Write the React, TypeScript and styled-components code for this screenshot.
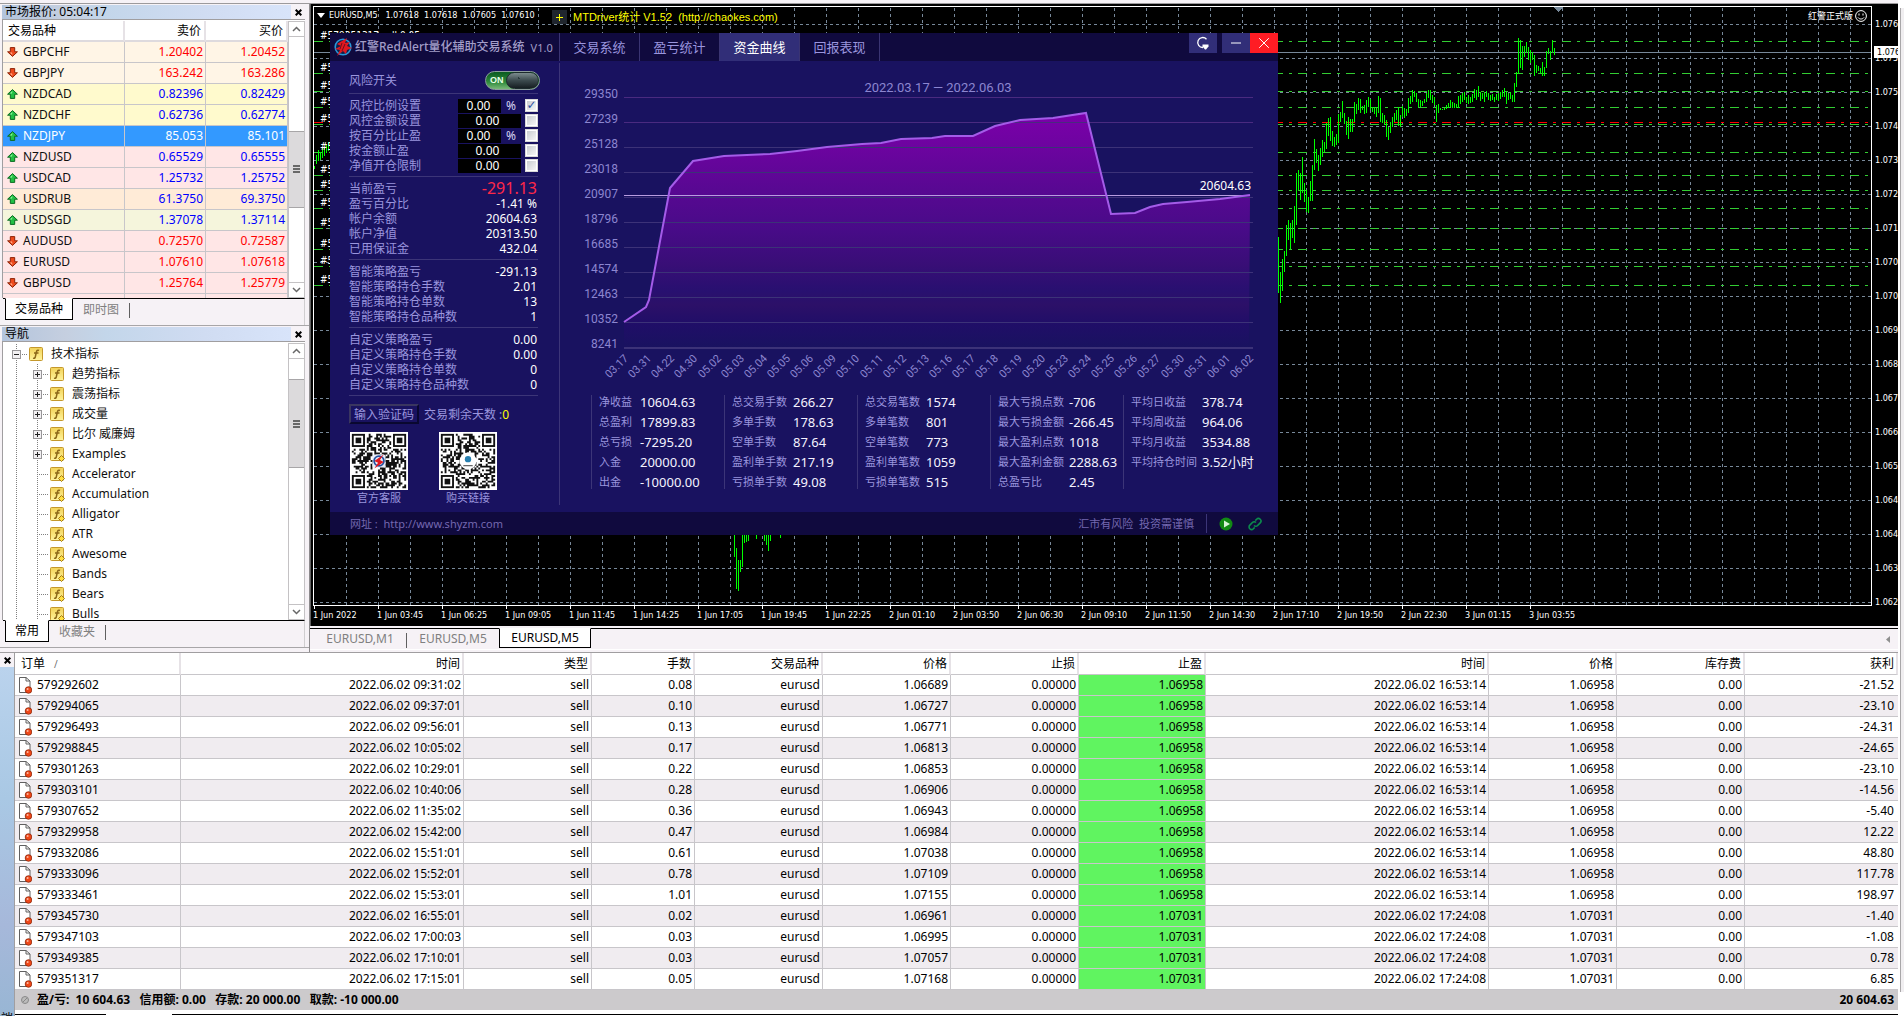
import React from "react";
import styled, { createGlobalStyle, css } from "styled-components";

const UI = `"Noto Sans", "Noto Sans CJK SC", sans-serif`;
const TINY = `"DejaVu Sans Condensed", "Noto Sans CJK SC", sans-serif`;
const THIN = `Roboto, "Noto Sans CJK SC", sans-serif`;

const Global = createGlobalStyle`
  * { box-sizing: border-box; }
  html, body { margin: 0; }
  body { background: #f6f2f6; font: 12px/14px ${UI}; color: #000; overflow: hidden; }
  button, input { font: inherit; margin: 0; padding: 0; border: 0; border-radius: 0; }
  svg { display: block; }
`;

const Page = styled.div`
  display: flex;
  min-height: 100vh;
`;
const Main = styled.main`
  flex: 1;
  min-width: 0;
  padding-top: 3px;
`;
const EdgeStrip = styled.div`
  width: 6px;
  padding: 8px 0 24px 2px;
  background: #fff;
  &::before {
    content: "";
    display: block;
    height: 100%;
    border-left: 1px solid #a8a6a8;
    background: #f0eef0;
  }
`;
const Workspace = styled.div`
  display: flex;
  border-top: 1px solid #9c9a9c;
`;
const Side = styled.aside`
  width: 310px;
  flex: none;
  border-right: 1px solid #8c8a8c;
  padding-bottom: 4px;
`;

/* docked panels */
const Dock = styled.section`
  padding: 1px 4px 0 2px;
  border-bottom: 1px solid #a8a6a8;
`;
const DockTitle = styled.header`
  display: flex;
  justify-content: space-between;
  align-items: center;
  height: 14px;
`;
const DockName = styled.h2`
  flex: 1;
  margin: 0;
  padding-left: 3px;
  font: 12px/14px ${UI};
  background: linear-gradient(90deg, #b3c4dc, #c5cfe0 22%, #c3d6ea 36%, #d0dcf2 70%, #d8e4fa);
`;
const CloseX = styled.button`
  width: 14px;
  height: 14px;
  background: none;
  display: grid;
  place-items: center;
`;
const DockFrame = styled.div`
  display: flex;
  height: 279px;
  border: 1px solid #a09ea0;
  border-width: 1px 0 0 1px;
  padding-top: 1px;
  background: #fff;
`;
const DockContent = styled.div`
  flex: 1;
  min-width: 0;
  overflow: hidden;
`;
const DockTabs = styled.div`
  display: flex;
  align-items: flex-start;
  height: 27px;
  margin-left: 1px;
  padding-left: 2px;
  border-top: 1px solid #000;
  border-right: 1px solid #d0ced0;
`;
const DockTab = styled.button<{ $on?: boolean }>`
  height: 22px;
  padding: 0 10px;
  color: #808080;
  background: transparent;
  ${(p) =>
    p.$on &&
    css`
      color: #000;
      background: #fff;
      margin-top: -1px;
      border: 1px solid #000;
      border-top-color: #fff;
      padding: 0 9px;
    `}
`;
const TabRule = styled.i`
  width: 1px;
  height: 15px;
  margin-top: 4px;
  background: #606060;
`;

const Track = styled.div`
  display: flex;
  flex-direction: column;
  width: 17px;
  border: 1px solid #c4c2c4;
  border-width: 0 1px;
`;
const Arrow = styled.button`
  height: 16px;
  flex: none;
  display: grid;
  place-items: center;
  background: #fff;
  border: 1px solid #c4c2c4;
  border-width: 1px 0;
`;
const Gap = styled.i<{ $grow: number }>`
  flex: ${(p) => p.$grow} 1 0;
`;
const Thumb = styled.i<{ $grow: number }>`
  flex: ${(p) => p.$grow} 1 0;
  display: grid;
  place-items: center;
  background: #dcdadc;
  border: 1px solid #a8a6a8;
  border-width: 1px 0;
`;

const Quotes = styled.table`
  width: 100%;
  table-layout: fixed;
  border-collapse: separate;
  border-spacing: 0;
`;
const QuoteHead = styled.th<{ $left?: boolean }>`
  height: 21px;
  padding: 0 3px 0 5px;
  font-weight: 400;
  text-align: ${(p) => (p.$left ? "left" : "right")};
  border-right: 2px solid #e6e2e6;
  border-bottom: 2px solid #dedade;
`;
const QuoteRow = styled.tr<{ $bg: string; $fg: string; $sel?: boolean }>`
  background: ${(p) => p.$bg};
  color: ${(p) => p.$fg};
  td {
    color: ${(p) => (p.$sel ? "#fff" : "inherit")};
  }
`;
const QuoteCell = styled.td`
  height: 21px;
  padding: 0 2px;
  text-align: right;
  border-right: 1px solid #c8c6ca;
  border-bottom: 1px solid #c8c6ca;
`;
const NameCell = styled.th<{ $sel?: boolean }>`
  height: 21px;
  padding: 0 0 0 4px;
  font-weight: 400;
  text-align: left;
  color: ${(p) => (p.$sel ? "#fff" : "#101010")};
  border-right: 1px solid #c8c6ca;
  border-bottom: 1px solid #c8c6ca;
`;
const IconText = styled.span<{ $gap: number }>`
  display: flex;
  align-items: center;
  gap: ${(p) => p.$gap}px;
`;

const Tree = styled.ul`
  list-style: none;
  margin: 0;
  padding: 1px 0 0;
`;
const Leaf = styled.li`
  display: flex;
  align-items: center;
  height: 20px;
  color: #101010;
`;
const Guide = styled.span<{ $w: number; $arm?: boolean }>`
  display: flex;
  align-items: center;
  width: ${(p) => p.$w}px;
  height: 20px;
  padding-left: 9px;
  background: repeating-linear-gradient(#808080 0 1px, transparent 1px 2px) 13px 0 / 1px 100% no-repeat,
    ${(p) => (p.$arm ? "repeating-linear-gradient(90deg, #808080 0 1px, transparent 1px 2px) 13px 10px / 11px 1px no-repeat" : "linear-gradient(transparent, transparent)")};
`;
const Expander = styled.button`
  width: 9px;
  height: 9px;
  background: #f2f0f2;
  border: 1px solid #989698;
`;
const LeafText = styled.span`
  padding-left: 7px;
`;

/* price chart */
const Center = styled.div`
  flex: 1;
  min-width: 0;
  display: flex;
  flex-direction: column;
`;
const ChartBox = styled.div`
  position: relative;
  display: grid;
  grid-template-columns: minmax(0, 1fr) 26px;
  grid-template-rows: auto 20px;
  padding: 2px 0 0 2px;
  border-left: 1px solid #606060;
  background: #000;
  color: #fff;
  font: 9px/12px ${TINY};
  overflow: hidden;
`;
const Plot = styled.div`
  border: 1px solid #fff;
`;
const PriceAxis = styled.div`
  display: flex;
  flex-direction: column;
  padding-top: 12px;
  margin-bottom: -8px;
  gap: 22px;
  span::before {
    content: "";
    width: 3px;
    height: 1px;
    margin-right: 3px;
    background: #fff;
  }
  span {
    display: flex;
    align-items: center;
    height: 12px;
  }
`;
const PriceTag = styled.div`
  position: absolute;
  top: 42px;
  right: 0;
  width: 24px;
  padding-left: 3px;
  background: #fff;
  color: #000;
`;
const TimeAxis = styled.div`
  display: flex;
  overflow: hidden;
`;
const Tick = styled.span`
  width: 64px;
  flex: none;
  white-space: nowrap;
  &::before {
    content: "";
    display: block;
    width: 1px;
    height: 3px;
    margin-left: 1px;
    background: #fff;
  }
`;
const ChartCaption = styled.div`
  position: absolute;
  top: 4px;
  left: 6px;
  display: flex;
  align-items: center;
  gap: 4px;
  white-space: pre;
  line-height: 14px;
`;
const StatsCaption = styled.div`
  position: absolute;
  top: 6px;
  left: 241px;
  display: flex;
  align-items: center;
  gap: 6px;
  color: #ffff00;
  font: 11px/14px "Liberation Sans", "Noto Sans CJK SC", sans-serif;
  white-space: pre;
`;
const AddButton = styled.button`
  width: 15px;
  height: 14px;
  background: #20262e;
  color: #ffff00;
  display: grid;
  place-items: center;
`;
const ExpertName = styled.div`
  position: absolute;
  top: 6px;
  right: 31px;
  display: flex;
  align-items: center;
  gap: 2px;
`;
const ChartTabs = styled.nav`
  display: flex;
  align-items: flex-start;
  height: 22px;
  margin-top: 2px;
  padding-left: 4px;
  border-top: 1px solid #000;
  border-bottom: 1px solid #fff;
`;
const ChartTab = styled.button<{ $on?: boolean }>`
  width: 92px;
  height: 20px;
  color: #808080;
  background: transparent;
  ${(p) =>
    p.$on &&
    css`
      color: #000;
      background: #fff;
      margin-top: -1px;
      border: 1px solid #000;
      border-top-color: #fff;
    `}
`;
const ScrollMark = styled.span`
  margin: 7px 8px 0 auto;
`;

/* RedAlert window */
const Win = styled.section`
  position: absolute;
  top: 29px;
  left: 19px;
  width: 948px;
  background: #191260;
  color: #9a95de;
  font: 12px/15px ${UI};
`;
const WinHead = styled.header`
  display: flex;
  height: 28px;
  background: #100a3e;
`;
const Brand = styled.div`
  display: flex;
  align-items: center;
  gap: 3px;
  width: 230px;
  padding-left: 4px;
  color: #a29dc8;
  border-right: 1px solid #3a3472;
`;
const BrandName = styled.h1`
  margin: 0;
  font: 500 12px/16px ${UI};
`;
const Version = styled.small`
  margin-left: 3px;
  font-size: 11px;
`;
const WinTab = styled.button<{ $on?: boolean }>`
  width: 80px;
  font: 13px/28px ${UI};
  color: ${(p) => (p.$on ? "#fff" : "#9a95de")};
  background: ${(p) => (p.$on ? "#312e78" : "transparent")};
  border-right: 1px solid #3a3472;
`;
const WinButtons = styled.div`
  display: flex;
  margin-left: auto;
`;
const WinButton = styled.button<{ $bg?: string; $apart?: boolean }>`
  width: 28px;
  height: 20px;
  margin-right: ${(p) => (p.$apart ? 5 : 0)}px;
  display: grid;
  place-items: center;
  background: ${(p) => p.$bg ?? "#312e78"};
`;
const WinBody = styled.div`
  display: flex;
`;
const Controls = styled.div`
  width: 230px;
  margin: 2px 0 7px;
  padding: 0 21px 0 19px;
  border-right: 1px solid #3c3578;
`;
const Group = styled.div`
  padding: 4px 0 3px 0;
  border-bottom: 1px solid #3c3578;
`;
const SwitchLine = styled.div`
  display: flex;
  align-items: center;
  justify-content: space-between;
  height: 31px;
  padding-top: 5px;
  border-bottom: 1px solid #3c3578;
`;
const Switch = styled.button`
  display: flex;
  align-items: center;
  justify-content: space-between;
  width: 55px;
  height: 19px;
  padding-left: 4px;
  margin-right: -2px;
  border: 1px solid #8c9c9c;
  border-radius: 10px;
  background: linear-gradient(#0a5a20, #2f8c3c 60%, #7ab87a);
  color: #e8ffe8;
  font: bold 9px/15px "Liberation Sans", sans-serif;
  overflow: hidden;
`;
const Knob = styled.i`
  width: 33px;
  height: 17px;
  border-radius: 9px;
  background: radial-gradient(circle, #2a3a3c 1px, transparent 1px) 10px 4px / 3px 3px no-repeat, linear-gradient(#7c8c8e, #3c4a4e 50%, #161e22);
  border: 1px solid #1c2a2c;
`;
const Line = styled.div`
  display: flex;
  align-items: center;
  height: 15px;
`;
const LineLabel = styled.label`
  flex: 1;
`;
const LineValue = styled.output<{ $alarm?: boolean }>`
  padding-right: 1px;
  color: ${(p) => (p.$alarm ? "#ff2848" : "#fff")};
  font-size: ${(p) => (p.$alarm ? 16 : 12)}px;
`;
const Field = styled.input<{ $wide?: boolean }>`
  width: ${(p) => (p.$wide ? 63 : 43)}px;
  height: 14px;
  margin-right: ${(p) => (p.$wide ? 4 : 0)}px;
  padding-right: ${(p) => (p.$wide ? 4 : 2)}px;
  background: #000;
  color: #fff;
  text-align: center;
`;
const Percent = styled.span`
  width: 24px;
  padding-left: 5px;
  color: #d8d6f4;
`;
const Tick13 = styled.input`
  appearance: none;
  width: 13px;
  height: 13px;
  border: 1px solid #d8d8d8;
  box-shadow: inset 0 0 0 1px #fff;
  background: linear-gradient(135deg, #c4c8cc, #fafafa);
  display: grid;
  place-items: center;
  &:checked::after {
    content: "✓";
    color: #2c50a0;
    font: bold 12px/11px "DejaVu Sans", sans-serif;
  }
`;
const CodeLine = styled.div`
  display: flex;
  align-items: center;
  gap: 5px;
  margin: 8px 0;
`;
const CodeButton = styled.button`
  width: 70px;
  height: 20px;
  background: #191260;
  color: #9a95de;
  border: 2px solid;
  border-color: #3a3660 #0a0830 #0a0830 #3a3660;
`;
const Days = styled.b`
  font-weight: 400;
  color: #ffff00;
`;
const Codes = styled.div`
  display: flex;
  gap: 31px;
  padding-left: 1px;
`;
const Code = styled.figure`
  margin: 0;
  width: 58px;
  text-align: center;
  font-size: 11px;
  line-height: 15px;
`;

const Report = styled.div`
  flex: 1;
`;
const Stats = styled.div`
  display: grid;
  grid-template-columns: repeat(5, 133px);
  padding: 10px 0 0 31px;
`;
const StatList = styled.dl<{ $label: number }>`
  display: grid;
  grid-template-columns: ${(p) => p.$label}px auto;
  grid-auto-rows: 14px;
  row-gap: 6px;
  height: 94px;
  margin: 0;
  padding-left: 7px;
  border-left: 1px solid #3c3578;
  line-height: 14px;
  white-space: nowrap;
  dt {
    font-size: 11px;
  }
  dd {
    margin: 0;
    font-size: 13px;
    color: #f4f2ff;
  }
`;
const WinFoot = styled.footer`
  display: flex;
  align-items: center;
  height: 23px;
  padding: 0 16px 0 20px;
  background: #100a3e;
  color: #7468b0;
  font-size: 11px;
`;
const Site = styled.a`
  color: inherit;
  text-decoration: none;
  white-space: pre;
`;
const Notice = styled.span`
  margin-left: auto;
  padding-right: 12px;
  line-height: 19px;
  border-right: 1px solid #3c3578;
`;
const FootButton = styled.button`
  width: 14px;
  height: 14px;
  margin-left: 12px;
  background: none;
  & + & {
    margin-left: 15px;
  }
`;

/* terminal */
const Terminal = styled.section`
  display: flex;
  border-top: 1px solid #a09ea0;
`;
const Handle = styled.div`
  width: 14px;
  display: flex;
  flex-direction: column;
  background: linear-gradient(#bcd4ee, #a9c8e4 40%, #a6b8da 75%, #98b6d4);
  overflow: hidden;
`;
const HandleTop = styled.div`
  height: 14px;
  padding-right: 2px;
  background: #f6f2f6;
`;
const HandleName = styled.span`
  margin: auto 0 -10px 1px;
`;
const Ledger = styled.div`
  flex: 1;
  min-width: 0;
  border-left: 1px solid #a09ea0;
  background: #fff;
`;
const Orders = styled.table`
  width: 100%;
  table-layout: fixed;
  border-collapse: separate;
  border-spacing: 0;
`;
const OrderHead = styled.th`
  height: 22px;
  padding: 0 2px 0 6px;
  font-weight: 400;
  text-align: right;
  white-space: pre;
  border-right: 2px solid #e6e2e6;
  border-bottom: 1px solid #c8c6ca;
  &:first-child {
    text-align: left;
  }
`;
const SortMark = styled.span`
  padding-left: 9px;
  color: #707070;
  font-size: 10px;
`;
const OrderRow = styled.tr`
  &:nth-child(even) {
    background: #f0ecf0;
  }
`;
const OrderCell = styled.td<{ $hit?: boolean }>`
  height: 21px;
  padding: 0 2px 0 3px;
  text-align: right;
  white-space: nowrap;
  border-right: 1px solid #c8c6ca;
  border-bottom: 1px solid #c8c6ca;
  background: ${(p) => (p.$hit ? "#60f460" : "transparent")};
  &:last-child {
    padding-right: 4px;
    border-right: 0;
  }
`;
const TotalCell = styled.td`
  height: 20px;
  padding: 0 4px 0 3px;
  font-weight: 700;
  white-space: pre;
  background: #cccacc;
  &:last-child {
    text-align: right;
  }
`;
const TerminalTabs = styled.div`
  display: flex;
  height: 6px;
  padding-top: 4px;
`;
const Edge = styled.i<{ $w?: number; $blank?: boolean }>`
  ${(p) => (p.$w ? `width: ${p.$w}px;` : "flex: 1;")}
  border-top: 1px solid ${(p) => (p.$blank ? "#fff" : "#000")};
`;

/* ---------- icons ---------- */
const Cross = ({ c = "#000", s = 7, w = 2 }: { c?: string; s?: number; w?: number }) => (
  <svg width={s} height={s} viewBox="0 0 10 10">
    <path d="M1 1l8 8M9 1l-8 8" stroke={c} strokeWidth={(w * 10) / s} />
  </svg>
);
const Direction = ({ up }: { up?: boolean }) => (
  <svg width="11" height="10" viewBox="0 0 11 10">
    <g transform={up ? "" : "translate(0 10) scale(1 -1)"}>
      <path
        d="M5.500.600L10.400 5.200H7.700V9.400H3.300V5.200H.600Z"
        fill={up ? "#22c044" : "#ee4a1c"}
        stroke={up ? "#0c6a22" : "#8e2408"}
        strokeWidth="1"
      />
      <path d="M5.500 2L3 4.500H5Z" fill={up ? "#9af0a0" : "#ffb494"} />
    </g>
  </svg>
);
const FIcon = ({ custom }: { custom?: boolean }) => (
  <svg width="15" height="15" viewBox="0 0 15 15">
    <defs>
      <linearGradient id="gold" x2="0" y2="1">
        <stop offset="0" stopColor="#f2d258" />
        <stop offset="1" stopColor="#fff49c" />
      </linearGradient>
    </defs>
    <rect x=".5" y=".5" width="13" height="13" rx="1" fill="url(#gold)" stroke="#c4982c" />
    <path d="M10 3.500C8.500 2.600 7.700 3.600 7.400 5L6.200 10.300C5.900 11.400 5.200 11.600 4.200 11M5 6H9.500" fill="none" stroke="#8c6818" strokeWidth="1.500" />
    {custom && <path d="M11.500 8.500l3 3-3 3-3-3Z" fill="#ffe040" stroke="#a07818" />}
  </svg>
);
const DocIcon = () => (
  <svg width="14" height="18" viewBox="0 0 14 18">
    <path d="M1.500 1.500H8L12 5V16.500H1.500Z" fill="#fff" stroke="#606060" />
    <path d="M8 1.500V5H12" fill="none" stroke="#606060" />
    <circle cx="10.500" cy="14" r="3.300" fill="#f04818" stroke="#8c2408" strokeWidth=".8" />
    <circle cx="9.600" cy="13" r="1" fill="#ffb8a0" />
  </svg>
);
const Chevron = ({ down }: { down?: boolean }) => (
  <svg width="9" height="6" viewBox="0 0 9 6">
    <path d={down ? "M1 1l3.500 3.500L8 1" : "M1 5l3.500-3.500L8 5"} fill="none" stroke="#686868" strokeWidth="1.500" />
  </svg>
);
const Scrollbar = ({ parts }: { parts: [number, number, number] }) => (
  <Track>
    <Arrow aria-label="向上"><Chevron /></Arrow>
    <Gap $grow={parts[0]} />
    <Thumb $grow={parts[1]}>
      <svg width="7" height="8"><path d="M0 1h7M0 4h7M0 7h7" stroke="#686868" strokeWidth="2" /></svg>
    </Thumb>
    <Gap $grow={parts[2]} />
    <Arrow aria-label="向下"><Chevron down /></Arrow>
  </Track>
);
const Logo = () => (
  <svg width="18" height="20" viewBox="0 0 18 20">
    <circle cx="9" cy="10" r="7.800" fill="#10204c" stroke="#2a98d8" strokeWidth="1.600" />
    <path d="M13 1L3 7l4 2-6 3 5 1-3 6 6-5 3 3 1-4 5-2-5-2 3-4-5 1Z" fill="#e01820" />
    <path d="M8 6l-2 6M11 7l-3 7" stroke="#701018" />
  </svg>
);

const QR_CELLS = 29;
const Qr = ({ seed, children }: { seed: number; children: React.ReactNode }) => {
  let s = seed;
  let d = "";
  const corner = (x: number, y: number) =>
    (x < 8 && y < 8) || (x >= QR_CELLS - 8 && y < 8) || (x < 8 && y >= QR_CELLS - 8);
  for (let y = 0; y < QR_CELLS; y++)
    for (let x = 0; x < QR_CELLS; x++) {
      s = (s * 1103515245 + 12345) % 2147483648;
      if (!corner(x, y) && (s >> 16) % 2) d += `M${x} ${y}h1v1h-1z`;
    }
  const eye = (x: number, y: number) => (
    <g transform={`translate(${x} ${y})`}>
      <rect x=".5" y=".5" width="6" height="6" fill="none" stroke="#111" />
      <rect x="2" y="2" width="3" height="3" fill="#111" />
    </g>
  );
  return (
    <svg width="58" height="58" viewBox="-1 -1 31 31">
      <rect x="-1" y="-1" width="31" height="31" fill="#fff" />
      <path d={d} fill="#111" />
      {eye(0, 0)}
      {eye(QR_CELLS - 7, 0)}
      {eye(0, QR_CELLS - 7)}
      {children}
    </svg>
  );
};

/* ---------- data ---------- */
const RED = "#ff0000";
const BLUE = "#0000ff";
const quotes: [string, string, string, boolean, string][] = [
  ["GBPCHF", "1.20402", "1.20452", false, "#fff5e6"],
  ["GBPJPY", "163.242", "163.286", false, "#fff5e6"],
  ["NZDCAD", "0.82396", "0.82429", true, "#fffacd"],
  ["NZDCHF", "0.62736", "0.62774", true, "#fffacd"],
  ["NZDJPY", "85.053", "85.101", true, "#3399ff"],
  ["NZDUSD", "0.65529", "0.65555", true, "#ffe6e6"],
  ["USDCAD", "1.25732", "1.25752", true, "#ffe6e6"],
  ["USDRUB", "61.3750", "69.3750", true, "#ffebd7"],
  ["USDSGD", "1.37078", "1.37114", true, "#f5f5dc"],
  ["AUDUSD", "0.72570", "0.72587", false, "#ffe6e6"],
  ["EURUSD", "1.07610", "1.07618", false, "#ffe6e6"],
  ["GBPUSD", "1.25764", "1.25779", false, "#ffe6e6"],
];
const folders = ["趋势指标", "震荡指标", "成交量", "比尔 威廉姆", "Examples"];
const indicators = ["Accelerator", "Accumulation", "Alligator", "ATR", "Awesome", "Bands", "Bears", "Bulls"];

const orders: string[][] = [
  ["579292602", "09:31:02", "0.08", "1.06689", "-21.52"],
  ["579294065", "09:37:01", "0.10", "1.06727", "-23.10"],
  ["579296493", "09:56:01", "0.13", "1.06771", "-24.31"],
  ["579298845", "10:05:02", "0.17", "1.06813", "-24.65"],
  ["579301263", "10:29:01", "0.22", "1.06853", "-23.10"],
  ["579303101", "10:40:06", "0.28", "1.06906", "-14.56"],
  ["579307652", "11:35:02", "0.36", "1.06943", "-5.40"],
  ["579329958", "15:42:00", "0.47", "1.06984", "12.22"],
  ["579332086", "15:51:01", "0.61", "1.07038", "48.80"],
  ["579333096", "15:52:01", "0.78", "1.07109", "117.78"],
  ["579333461", "15:53:01", "1.01", "1.07155", "198.97"],
  ["579345730", "16:55:01", "0.02", "1.06961", "-1.40"],
  ["579347103", "17:00:03", "0.03", "1.06995", "-1.08"],
  ["579349385", "17:10:01", "0.03", "1.07057", "0.78"],
  ["579351317", "17:15:01", "0.05", "1.07168", "6.85"],
];

const orderLines = [41, 73, 91, 107, 124, 152, 175, 190, 208, 228, 249, 266, 285];
/* bars two pixels apart: high then low of each, in thirds of a pixel */
const rally: number[] = [
  711, 880, 815, 908, 777, 873, 753, 816, 675, 767, 660, 719, 670, 748, 660, 714, 618, 728, 519, 675, 510, 570, 519, 600,
  472, 578, 549, 607, 571, 636, 591, 638, 543, 603, 495, 602, 417, 510, 447, 490, 466, 512, 443, 494, 420, 470, 427, 457,
  370, 447, 354, 407, 350, 422, 393, 437, 411, 442, 402, 436, 342, 430, 336, 365, 303, 353, 339, 372, 362, 404, 351, 418,
  358, 396, 357, 396, 306, 367, 313, 343, 294, 330, 297, 340, 318, 330, 315, 342, 300, 340, 290, 322, 298, 330, 320, 335,
  322, 343, 325, 350, 288, 340, 295, 365, 340, 370, 345, 375, 360, 412, 380, 420, 365, 400, 350, 380, 340, 365, 330, 360,
  322, 378, 345, 380, 318, 350, 325, 355, 328, 348, 295, 340, 288, 312, 270, 305, 272, 290, 280, 305, 298, 322, 300, 322,
  302, 318, 298, 310, 280, 305, 270, 295, 270, 300, 285, 310, 290, 315, 315, 365, 312, 340, 325, 330, 326, 330, 325, 330,
  315, 328, 308, 325, 300, 320, 305, 325, 308, 325, 312, 325, 288, 325, 285, 312, 278, 305, 275, 300, 290, 310, 285, 312,
  292, 308, 283, 305, 268, 295, 270, 300, 258, 290, 275, 302, 280, 298, 275, 305, 272, 292, 280, 300, 285, 302, 282, 300,
  290, 305, 283, 300, 280, 302, 275, 298, 270, 290, 265, 290, 275, 312, 280, 300, 275, 298, 285, 305, 250, 305, 215, 262,
  113, 222, 120, 203, 138, 210, 138, 170, 125, 160, 140, 180, 150, 188, 155, 180, 165, 228, 195, 220, 197, 212, 205, 220,
  185, 228, 200, 228, 152, 205, 143, 162, 152, 180, 120, 160, 143, 165,
];
const looseBars: [number, number, number][] = [
  [314, 166, 169], [316, 155, 164], [318, 150, 161], [320, 152, 160], [322, 148, 158], [324, 147, 156], [326, 145, 153], [328, 142, 151],
  [734, 530, 557], [736, 548, 589], [738, 560, 591], [740, 560, 572], [742, 530, 567], [744, 530, 543], [746, 530, 542], [748, 530, 541],
  [756, 530, 539], [764, 530, 541], [766, 530, 545], [768, 530, 551], [770, 530, 541], [780, 530, 538],
];
const times = [
  "1 Jun 2022", "1 Jun 03:45", "1 Jun 06:25", "1 Jun 09:05", "1 Jun 11:45", "1 Jun 14:25", "1 Jun 17:05", "1 Jun 19:45",
  "1 Jun 22:25", "2 Jun 01:10", "2 Jun 03:50", "2 Jun 06:30", "2 Jun 09:10", "2 Jun 11:50", "2 Jun 14:30", "2 Jun 17:10",
  "2 Jun 19:50", "2 Jun 22:30", "3 Jun 01:15", "3 Jun 03:55",
];
const prices = [
  "1.076", "1.075", "1.075", "1.074", "1.073", "1.072", "1.071", "1.070", "1.070", "1.069", "1.068", "1.067", "1.066",
  "1.065", "1.064", "1.064", "1.063", "1.062",
];

const equityDays =
  "03.17 03.31 04.22 04.30 05.02 05.03 05.04 05.05 05.06 05.09 05.10 05.11 05.12 05.13 05.16 05.17 05.18 05.19 05.20 05.23 05.24 05.25 05.26 05.27 05.30 05.31 06.01 06.02".split(" ");
const levels = [29350, 27239, 25128, 23018, 20907, 18796, 16685, 14574, 12463, 10352, 8241];
const equity =
  "624,322 646,307 649,300 670,188 693,161 724,156 770,154 797,151 827,147 862,144 881,143 901,139 932,138 945,136 973,136 995,126 1020,120 1053,118 1086,113 1111,214 1135,213 1150,207 1163,204 1187,202 1220,199 1250,195";

const stats: [number, [string, string][]][] = [
  [41, [["净收益", "10604.63"], ["总盈利", "17899.83"], ["总亏损", "-7295.20"], ["入金", "20000.00"], ["出金", "-10000.00"]]],
  [61, [["总交易手数", "266.27"], ["多单手数", "178.63"], ["空单手数", "87.64"], ["盈利单手数", "217.19"], ["亏损单手数", "49.08"]]],
  [61, [["总交易笔数", "1574"], ["多单笔数", "801"], ["空单笔数", "773"], ["盈利单笔数", "1059"], ["亏损单笔数", "515"]]],
  [71, [["最大亏损点数", "-706"], ["最大亏损金额", "-266.45"], ["最大盈利点数", "1018"], ["最大盈利金额", "2288.63"], ["总盈亏比", "2.45"]]],
  [71, [["平均日收益", "378.74"], ["平均周收益", "964.06"], ["平均月收益", "3534.88"], ["平均持仓时间", "3.52小时"]]],
];
const limits: [string, boolean, boolean][] = [
  ["风控比例设置", true, true],
  ["风控金额设置", false, false],
  ["按百分比止盈", true, false],
  ["按金额止盈", false, false],
  ["净值开仓限制", false, false],
];
const groups: [string, string][][] = [
  [["当前盈亏", "-291.13"], ["盈亏百分比", "-1.41 %"], ["帐户余额", "20604.63"], ["帐户净值", "20313.50"], ["已用保证金", "432.04"]],
  [["智能策略盈亏", "-291.13"], ["智能策略持仓手数", "2.01"], ["智能策略持仓单数", "13"], ["智能策略持仓品种数", "1"]],
  [["自定义策略盈亏", "0.00"], ["自定义策略持仓手数", "0.00"], ["自定义策略持仓单数", "0"], ["自定义策略持仓品种数", "0"]],
];

/* ---------- parts ---------- */
const MarketWatch = () => (
  <Dock>
    <DockTitle>
      <DockName>市场报价: 05:04:17</DockName>
      <CloseX aria-label="关闭"><Cross /></CloseX>
    </DockTitle>
    <DockFrame>
      <DockContent>
        <Quotes>
          <colgroup><col width="122" /><col width="81" /><col /></colgroup>
          <thead>
            <tr><QuoteHead $left>交易品种</QuoteHead><QuoteHead>卖价</QuoteHead><QuoteHead>买价</QuoteHead></tr>
          </thead>
          <tbody>
            {quotes.map(([n, bid, ask, up, bg], i) => (
              <QuoteRow key={n} $bg={bg} $fg={up ? BLUE : RED} $sel={i === 4}>
                <NameCell scope="row" $sel={i === 4}><IconText $gap={5}><Direction up={up} />{n}</IconText></NameCell>
                <QuoteCell>{bid}</QuoteCell>
                <QuoteCell>{ask}</QuoteCell>
              </QuoteRow>
            ))}
            <QuoteRow $bg="#ffe6e6" $fg={RED}><NameCell /><QuoteCell /><QuoteCell /></QuoteRow>
          </tbody>
        </Quotes>
      </DockContent>
      <Scrollbar parts={[95, 75, 75]} />
    </DockFrame>
    <DockTabs>
      <DockTab $on>交易品种</DockTab>
      <DockTab>即时图</DockTab>
      <TabRule />
    </DockTabs>
  </Dock>
);

const PlusMark = ({ minus }: { minus?: boolean }) => (
  <svg width="7" height="7"><path d={minus ? "M1 3.500h5" : "M1 3.500h5M3.500 1v5"} stroke="#202020" /></svg>
);
const Navigator = () => (
  <Dock>
    <DockTitle>
      <DockName>导航</DockName>
      <CloseX aria-label="关闭"><Cross /></CloseX>
    </DockTitle>
    <DockFrame>
      <DockContent>
        <Tree>
          <Leaf>
            <Guide $w={26} $arm><Expander aria-label="折叠"><PlusMark minus /></Expander></Guide>
            <FIcon /><LeafText>技术指标</LeafText>
          </Leaf>
          {folders.map((f) => (
            <Leaf key={f}>
              <Guide $w={21} />
              <Guide $w={26} $arm><Expander aria-label="展开"><PlusMark /></Expander></Guide>
              <FIcon custom={f === "Examples"} /><LeafText>{f}</LeafText>
            </Leaf>
          ))}
          {indicators.map((f) => (
            <Leaf key={f}>
              <Guide $w={21} />
              <Guide $w={26} $arm />
              <FIcon custom /><LeafText>{f}</LeafText>
            </Leaf>
          ))}
        </Tree>
      </DockContent>
      <Scrollbar parts={[20, 87, 136]} />
    </DockFrame>
    <DockTabs>
      <DockTab $on>常用</DockTab>
      <DockTab>收藏夹</DockTab>
      <TabRule />
    </DockTabs>
  </Dock>
);

const FAR = 4000;
const PriceChart = () => (
  <svg width="100%" height="598" shapeRendering="crispEdges">
    <g transform="translate(-314 -7)">
      <g stroke="#778899" strokeDasharray="3 3">
        {Array.from({ length: 110 }, (_, i) => 346 + 32 * i).map((x) => <path key={x} d={`M${x}.500 8V605`} />)}
        {Array.from({ length: 18 }, (_, i) => 24 + 34 * i).map((y) => <path key={y} d={`M314 ${y}.500H${FAR}`} />)}
      </g>
      <path d={`M314 52.500H${FAR}`} stroke="#778899" />
      <g stroke="#32cd32" strokeDasharray="9 6 3 6">
        {orderLines.map((y) => <path key={y} d={`M314 ${y}.500H${FAR}`} />)}
        <path d={`M314 122.500H${FAR}`} stroke="#ff0000" />
      </g>
      <g fill="#00ff00">
        {Array.from({ length: rally.length / 2 }, (_, i) => {
          const hi = Math.round(rally[2 * i] / 3);
          const lo = Math.round(rally[2 * i + 1] / 3);
          return <rect key={i} x={1278 + 2 * i} y={hi} width="1" height={lo - hi} />;
        })}
        {looseBars.map(([x, hi, lo]) => <rect key={x} x={x} y={hi} width="1" height={lo - hi} />)}
      </g>
      <g fill="#fff" fontSize="10">
        {orderLines.map((y, i) => <text key={y} x="320" y={y - 2}>{i ? "#5" : "#579351317 sell 0.05"}</text>)}
      </g>
      <path d="M1554 7h9l-4.500 5Z" fill="#778899" />
    </g>
  </svg>
);

const EquityChart = () => (
  <svg width="718" height="324" viewBox="560 61 718 324" fontFamily={THIN}>
    <defs>
      <linearGradient id="eq" gradientUnits="userSpaceOnUse" x1="0" y1="113" x2="0" y2="347">
        <stop offset="0" stopColor="#7c00aa" />
        <stop offset=".33" stopColor="#580892" />
        <stop offset=".5" stopColor="#480b88" />
        <stop offset=".65" stopColor="#380e76" />
        <stop offset=".76" stopColor="#281070" />
        <stop offset=".82" stopColor="#2c1068" />
        <stop offset=".9" stopColor="#200e68" />
        <stop offset="1" stopColor="#191260" />
      </linearGradient>
    </defs>
    <text x="938" y="92" fontSize="13" textAnchor="middle" fill="#8c86d0">2022.03.17 — 2022.06.03</text>
    <path d={`M${equity.replace(/ /g, "L")}L1249,347L624,347Z`} fill="url(#eq)" />
    <g shapeRendering="crispEdges">
      {levels.map((v, i) => (
        <path key={v} d={`M624 ${97.5 + 25 * i}H1253`} stroke={i < 2 ? "#4a2a80" : "#3c3278"} strokeWidth={i === 10 ? 2 : 1} />
      ))}
      <path d="M624 195.500H1250" stroke="#b89ce0" />
    </g>
    <polyline points={equity} fill="none" stroke="#a45ce8" strokeWidth="2" />
    <g fontSize="12" fill="#8c86d0" textAnchor="end">
      {levels.map((v, i) => <text key={v} x="618" y={98 + 25 * i}>{v}</text>)}
    </g>
    <text x="1251" y="190" fontSize="12" textAnchor="end" fill="#fff" fontFamily={UI}>20604.63</text>
    <g fontSize="11" fill="#8c86d0" textAnchor="end">
      {equityDays.map((d, i) => {
        const x = Math.round(629 + (i * 625) / 27);
        return <text key={d} transform={`translate(${x} 359) rotate(-45)`}>{d}</text>;
      })}
    </g>
  </svg>
);

const RedAlert = () => (
  <Win>
    <WinHead>
      <Brand>
        <Logo />
        <BrandName>红警RedAlert量化辅助交易系统</BrandName>
        <Version>V1.0</Version>
      </Brand>
      {["交易系统", "盈亏统计", "资金曲线", "回报表现"].map((t) => (
        <WinTab key={t} $on={t === "资金曲线"}>{t}</WinTab>
      ))}
      <WinButtons>
        <WinButton $apart aria-label="切换">
          <svg width="14" height="14" viewBox="0 0 14 14">
            <path d="M10.500 3.200A5 5 0 1 0 7 11.500" fill="none" stroke="#fff" strokeWidth="1.300" />
            <path d="M6.500 8.500h6v2l-2.500 3h-1l-2.500-3Z" fill="#fff" />
          </svg>
        </WinButton>
        <WinButton aria-label="最小化"><svg width="10" height="2"><path d="M0 1h10" stroke="#fff" /></svg></WinButton>
        <WinButton $bg="#ff1c24" aria-label="关闭"><Cross c="#fff" s={12} w={1} /></WinButton>
      </WinButtons>
    </WinHead>
    <WinBody>
      <Controls>
        <SwitchLine>
          <span id="risk">风险开关</span>
          <Switch aria-labelledby="risk" aria-pressed="true">ON<Knob /></Switch>
        </SwitchLine>
        <Group>
          {limits.map(([label, pct, on], i) => (
            <Line key={label}>
              <LineLabel htmlFor={`limit${i}`}>{label}</LineLabel>
              <Field id={`limit${i}`} $wide={!pct} defaultValue="0.00" />
              {pct && <Percent>%</Percent>}
              <Tick13 type="checkbox" aria-label={label} defaultChecked={on} />
            </Line>
          ))}
        </Group>
        {groups.map((g, gi) => (
          <Group key={gi}>
            {g.map(([label, value], i) => (
              <Line key={label}>
                <LineLabel>{label}</LineLabel>
                <LineValue $alarm={gi === 0 && i === 0}>{value}</LineValue>
              </Line>
            ))}
          </Group>
        ))}
        <CodeLine>
          <CodeButton>输入验证码</CodeButton>
          <span>交易剩余天数 :<Days>0</Days></span>
        </CodeLine>
        <Codes>
          <Code>
            <Qr seed={77}>
              <rect x="11" y="11" width="7" height="7" rx="1" fill="#e8ecf8" />
              <circle cx="14.500" cy="14.500" r="2.600" fill="none" stroke="#2050a0" />
              <path d="M17 11l-5 3.500 2 1-2 3 5-3.500-2-1Z" fill="#e01820" />
            </Qr>
            <figcaption>官方客服</figcaption>
          </Code>
          <Code>
            <Qr seed={4242}>
              <circle cx="14.500" cy="14.500" r="4.500" fill="#fff" />
              <circle cx="14.500" cy="13.500" r="1.700" fill="#2880b0" />
              <path d="M12 17h5" stroke="#555" strokeWidth=".6" />
            </Qr>
            <figcaption>购买链接</figcaption>
          </Code>
        </Codes>
      </Controls>
      <Report>
        <EquityChart />
        <Stats>
          {stats.map(([w, rows], i) => (
            <StatList key={i} $label={w}>
              {rows.map(([k, v]) => (
                <React.Fragment key={k}><dt>{k}</dt><dd>{v}</dd></React.Fragment>
              ))}
            </StatList>
          ))}
        </Stats>
      </Report>
    </WinBody>
    <WinFoot>
      <Site href="http://www.shyzm.com">网址 :  http://www.shyzm.com</Site>
      <Notice>汇市有风险&nbsp; 投资需谨慎</Notice>
      <FootButton aria-label="播放">
        <svg width="14" height="14"><circle cx="7" cy="7" r="6.500" fill="#128a14" /><path d="M5 3.500v7l6-3.500Z" fill="#d8f4d8" /></svg>
      </FootButton>
      <FootButton aria-label="链接">
        <svg width="14" height="14" viewBox="0 0 14 14" fill="none" stroke="#0c8c4c" strokeWidth="1.600">
          <path d="M6 8.500a2.500 2.500 0 0 0 3.600 0l2.600-2.600a2.500 2.500 0 0 0-3.600-3.600L7.300 3.600" />
          <path d="M8 5.500a2.500 2.500 0 0 0-3.600 0L1.800 8.100a2.500 2.500 0 0 0 3.600 3.600l1.300-1.300" />
        </svg>
      </FootButton>
    </WinFoot>
  </Win>
);

const headings = ["订单", "时间", "类型", "手数", "交易品种", "价格", "止损", "止盈", "时间", "价格", "库存费", "获利"];
const widths = [166, 283, 128, 103, 128, 128, 128, 127, 283, 128, 128];

const TerminalPanel = () => (
  <Terminal>
    <Handle>
      <HandleTop><CloseX aria-label="关闭"><Cross /></CloseX></HandleTop>
      <HandleName>端</HandleName>
    </Handle>
    <Ledger>
      <Orders>
        <colgroup>{widths.map((w, i) => <col key={i} width={w} />)}<col /></colgroup>
        <thead>
          <tr>{headings.map((h, i) => <OrderHead key={i}>{h}{i === 0 && <SortMark>/</SortMark>}</OrderHead>)}</tr>
        </thead>
        <tbody>
          {orders.map(([id, t, lots, open, profit], i) => {
            const late = i > 10;
            const close = late ? "1.07031" : "1.06958";
            return (
              <OrderRow key={id}>
                <OrderCell><IconText $gap={5}><DocIcon />{id}</IconText></OrderCell>
                <OrderCell>2022.06.02 {t}</OrderCell>
                <OrderCell>sell</OrderCell>
                <OrderCell>{lots}</OrderCell>
                <OrderCell>eurusd</OrderCell>
                <OrderCell>{open}</OrderCell>
                <OrderCell>0.00000</OrderCell>
                <OrderCell $hit>{close}</OrderCell>
                <OrderCell>2022.06.02 {late ? "17:24:08" : "16:53:14"}</OrderCell>
                <OrderCell>{close}</OrderCell>
                <OrderCell>0.00</OrderCell>
                <OrderCell>{profit}</OrderCell>
              </OrderRow>
            );
          })}
        </tbody>
        <tfoot>
          <tr>
            <TotalCell colSpan={11}>
              <IconText $gap={7}>
                <svg width="12" height="10"><circle cx="7" cy="5" r="3.500" fill="#bbb" stroke="#888" /><path d="M5 7l4-4" stroke="#888" /></svg>
                {"盈/亏:  10 604.63   信用额: 0.00   存款: 20 000.00   取款: -10 000.00"}
              </IconText>
            </TotalCell>
            <TotalCell>20 604.63</TotalCell>
          </tr>
        </tfoot>
      </Orders>
      <TerminalTabs><Edge $w={91} /><Edge $w={66} $blank /><Edge /></TerminalTabs>
    </Ledger>
  </Terminal>
);

export default function App() {
  return (
    <>
      <Global />
      <Page>
        <Main>
          <Workspace>
            <Side>
              <MarketWatch />
              <Navigator />
            </Side>
            <Center>
              <ChartBox>
                <Plot><PriceChart /></Plot>
                <PriceAxis>{prices.map((p, i) => <span key={i}>{p}</span>)}</PriceAxis>
                <TimeAxis>{times.map((t) => <Tick key={t}>{t}</Tick>)}</TimeAxis>
                <PriceTag>1.076</PriceTag>
                <ChartCaption>
                  <svg width="8" height="5"><path d="M0 0h8l-4 5Z" fill="#fff" /></svg>
                  {"EURUSD,M5   1.07618  1.07618  1.07605  1.07610"}
                </ChartCaption>
                <StatsCaption>
                  <AddButton aria-label="添加"><svg width="7" height="7"><path d="M0 3.500h7M3.500 0v7" stroke="#ff0" /></svg></AddButton>
                  MTDriver统计 V1.52  (http://chaokes.com)
                </StatsCaption>
                <ExpertName>
                  红警正式版
                  <svg width="12" height="12" viewBox="0 0 12 12" fill="none" stroke="#fff">
                    <circle cx="6" cy="6" r="5.400" />
                    <path d="M4 3.500v2M8 3.500v2M3 7.500c1.500 2 4.500 2 6 0" />
                  </svg>
                </ExpertName>
                <RedAlert />
              </ChartBox>
              <ChartTabs>
                <ChartTab>EURUSD,M1</ChartTab>
                <TabRule />
                <ChartTab>EURUSD,M5</ChartTab>
                <ChartTab $on>EURUSD,M5</ChartTab>
                <ScrollMark><svg width="4" height="7"><path d="M4 0v7L0 3.500Z" fill="#909090" /></svg></ScrollMark>
              </ChartTabs>
            </Center>
          </Workspace>
          <TerminalPanel />
        </Main>
        <EdgeStrip />
      </Page>
    </>
  );
}
